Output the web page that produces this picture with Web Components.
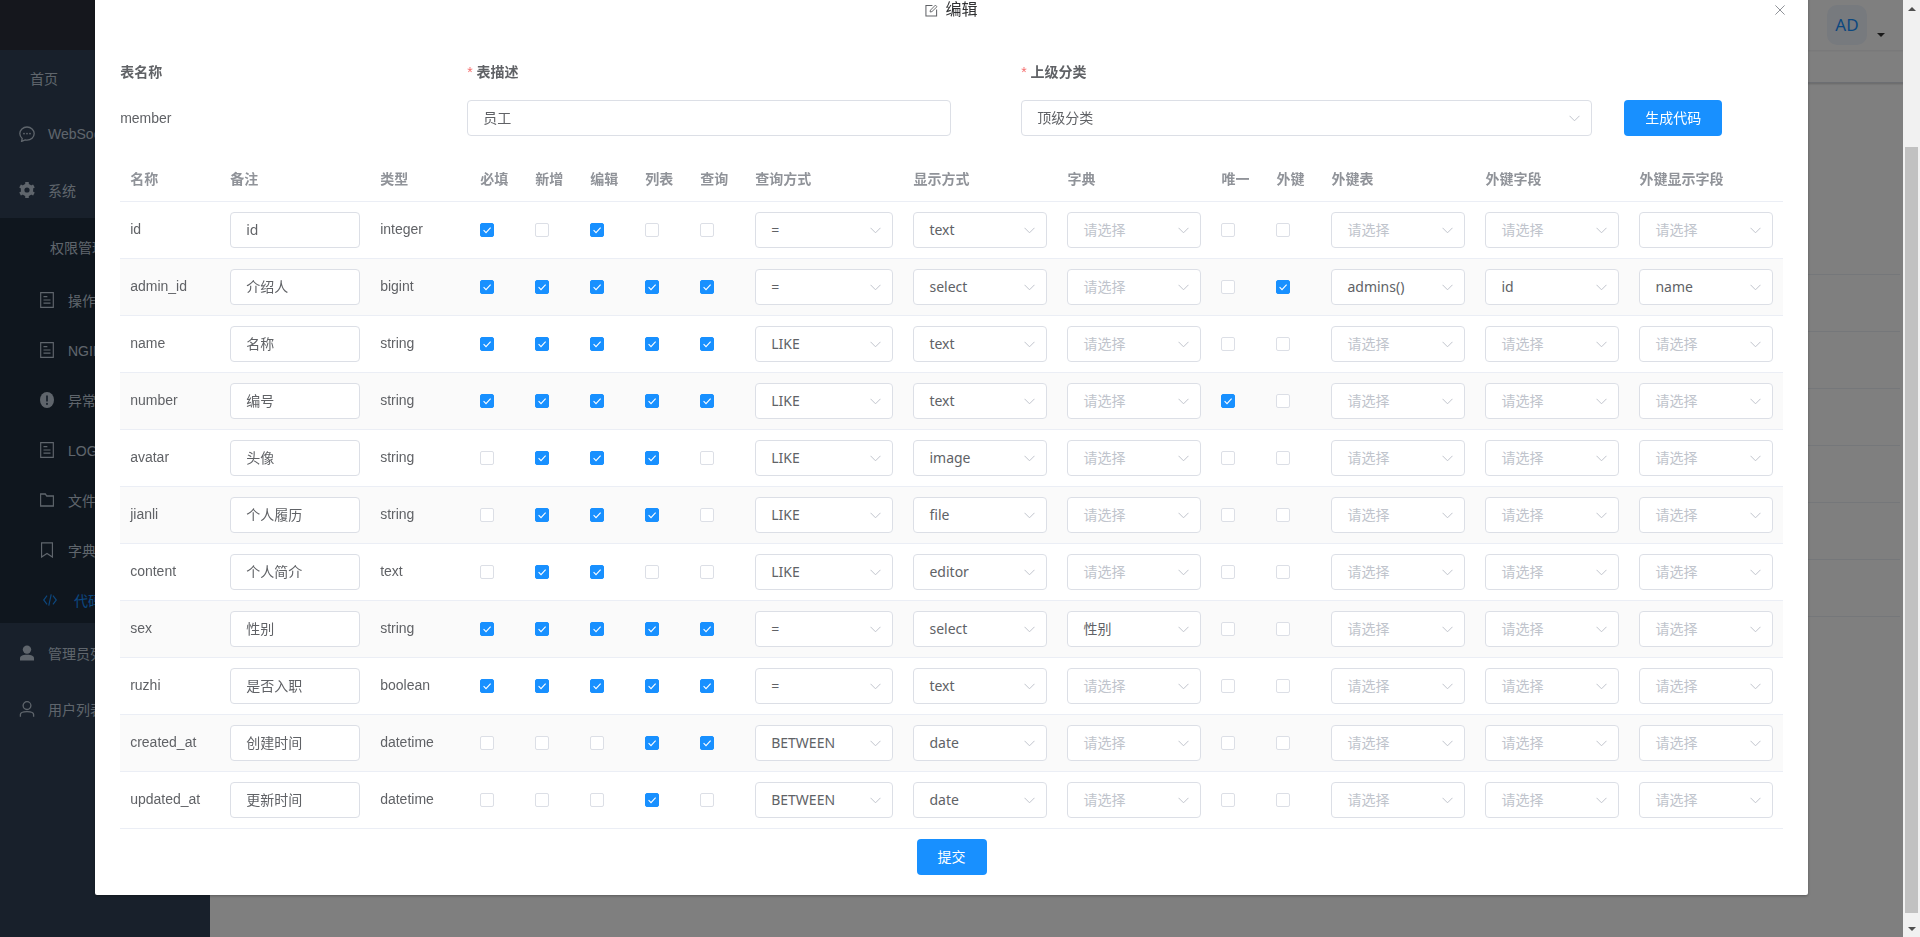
<!DOCTYPE html>
<html lang="zh">
<head>
<meta charset="utf-8">
<title>编辑</title>
<style>
  html, body { margin: 0; height: 100%; overflow: hidden; background: #fff; }
  body { font: 14px "Liberation Sans", "Noto Sans CJK SC", sans-serif; color: #606266; }
</style>
</head>
<body>
<app-shell>
  <app-sidebar slot="side"></app-sidebar>
  <app-navbar slot="top"></app-navbar>
</app-shell>
<modal-backdrop>
  <edit-dialog></edit-dialog>
</modal-backdrop>
<page-scrollbar></page-scrollbar>

<script>
const ICONS = {
  chat: '<path d="M8 1c-4 0-7.2 2.9-7.2 6.6 0 1.9.9 3.7 2.4 4.9L2.6 15.4l3.5-1.5c.6.2 1.2.3 1.9.3 4 0 7.2-3 7.2-6.6S12 1 8 1z" fill="none" stroke="currentColor" stroke-width="1.3"/><circle cx="5" cy="7.6" r=".9" fill="currentColor"/><circle cx="8" cy="7.6" r=".9" fill="currentColor"/><circle cx="11" cy="7.6" r=".9" fill="currentColor"/>',
  gear: '<g fill="currentColor"><path fill-rule="evenodd" d="M8 1.8a6.2 6.2 0 1 0 0 12.4A6.2 6.2 0 0 0 8 1.8zm0 3.6a2.6 2.6 0 1 1 0 5.2 2.6 2.6 0 0 1 0-5.2z"/><rect x="6.2" y="0" width="3.6" height="3.6" rx=".5"/><rect x="6.2" y="12.4" width="3.6" height="3.6" rx=".5"/><rect x="6.2" y="0" width="3.6" height="3.6" rx=".5" transform="rotate(60 8 8)"/><rect x="6.2" y="12.4" width="3.6" height="3.6" rx=".5" transform="rotate(60 8 8)"/><rect x="6.2" y="0" width="3.6" height="3.6" rx=".5" transform="rotate(120 8 8)"/><rect x="6.2" y="12.4" width="3.6" height="3.6" rx=".5" transform="rotate(120 8 8)"/></g>',
  doc: '<path d="M.8.7h14.4v14.6H.8z" fill="none" stroke="currentColor" stroke-width="1.3"/><path d="M4 4.6h4.4M4 8h8M4 11.2h8" stroke="currentColor" stroke-width="1.2" fill="none"/>',
  alert: '<circle cx="8" cy="8" r="8" fill="currentColor"/><path d="M8 3.4v6" stroke="#304156" stroke-width="2" fill="none"/><circle cx="8" cy="11.9" r="1.1" fill="#304156"/>',
  folder: '<path d="M.7 2h5.4l1.6 2h7.6v10H.7z" fill="none" stroke="currentColor" stroke-width="1.3"/>',
  bookmark: '<path d="M1.8.8h12.4v14.2L8 11.4 1.8 15z" fill="none" stroke="currentColor" stroke-width="1.3"/>',
  code: '<path d="M4.6 3.6L.8 8l3.8 4.4M11.4 3.6L15.2 8l-3.8 4.4M9.4 2.4L6.6 13.6" fill="none" stroke="currentColor" stroke-width="1.3"/>',
  user: '<circle cx="8" cy="4.6" r="4.2" fill="currentColor"/><path d="M1 15.6v-2.2c0-2.4 2.4-3.6 7-3.6s7 1.2 7 3.6v2.2z" fill="currentColor"/>',
  userline: '<circle cx="8" cy="4.6" r="3.9" fill="none" stroke="currentColor" stroke-width="1.3"/><path d="M1.4 15.8v-2.2c0-2 2.2-3 6.6-3s6.6 1 6.6 3v2.2" fill="none" stroke="currentColor" stroke-width="1.3"/>',
};

class AppShell extends HTMLElement {
  constructor() {
    super();
    this.attachShadow({ mode: 'open' });
    this.shadowRoot.innerHTML = `
      <style>
        :host { display: flex; height: 937px; }
        #main { flex: 1; display: flex; flex-direction: column; min-width: 0; }
      </style>
      <slot name="side"></slot>
      <div id="main"><slot name="top"></slot></div>
    `;
  }
}
customElements.define('app-shell', AppShell);

class MenuEntry extends HTMLElement {
  constructor() {
    super();
    this.attachShadow({ mode: 'open' });
    const icon = this.getAttribute('icon');
    this.shadowRoot.innerHTML = `
      <style>
        :host {
          display: flex;
          align-items: center;
          height: 56px;
          padding-left: 19px;
          gap: 13px;
          color: #bfcbd9;
          font-size: 14px;
          white-space: nowrap;
        }
        :host([plain]) { padding-left: 30px; }
        :host([sub]) { height: 50px; padding-left: 40px; gap: 14px; }
        :host([head]) { height: 57px; padding-left: 50px; box-sizing: border-box; }
        :host([active]) { color: #1890ff; padding-left: 43px; gap: 17px; }
        svg { width: 16px; height: 16px; flex: none; }
        :host([sub]) svg { width: 14px; height: 16px; }
      </style>
      ${icon ? `<svg viewBox="0 0 16 16" preserveAspectRatio="none">${ICONS[icon]}</svg>` : ''}
      <slot></slot>
    `;
  }
}
customElements.define('menu-entry', MenuEntry);

class AppSidebar extends HTMLElement {
  constructor() {
    super();
    this.attachShadow({ mode: 'open' });
    this.shadowRoot.innerHTML = `
      <style>
        :host { display: block; width: 210px; flex: none; background: #304156; }
        #logo { height: 50px; background: #2b2f3a; }
        #sub { background: #1f2d3d; height: 405px; margin-bottom: 2px; overflow: hidden; }
      </style>
      <div id="logo"></div>
      <menu-entry plain>首页</menu-entry>
      <menu-entry icon="chat">WebSocket</menu-entry>
      <menu-entry icon="gear">系统</menu-entry>
      <div id="sub">
        <menu-entry sub head>权限管理</menu-entry>
        <menu-entry sub icon="doc">操作日志</menu-entry>
        <menu-entry sub icon="doc">NGINX日志</menu-entry>
        <menu-entry sub icon="alert">异常日志</menu-entry>
        <menu-entry sub icon="doc">LOG日志</menu-entry>
        <menu-entry sub icon="folder">文件管理</menu-entry>
        <menu-entry sub icon="bookmark">字典管理</menu-entry>
        <menu-entry sub active icon="code">代码生成</menu-entry>
      </div>
      <menu-entry icon="user">管理员列表</menu-entry>
      <menu-entry icon="userline">用户列表</menu-entry>
    `;
  }
}
customElements.define('app-sidebar', AppSidebar);

class AppNavbar extends HTMLElement {
  constructor() {
    super();
    this.attachShadow({ mode: 'open' });
    this.shadowRoot.innerHTML = `
      <style>
        :host { display: block; }
        #bar {
          height: 50px;
          display: flex;
          justify-content: flex-end;
          align-items: center;
          padding-right: 35px;
          gap: 10px;
          background: #fff;
          box-shadow: 0 1px 2px rgba(0, 21, 41, .08);
          position: relative;
        }
        #avatar {
          width: 40px;
          height: 40px;
          border-radius: 10px;
          background: #eef4fc;
          color: #1890ff;
          font: 17px/40px "Noto Sans", sans-serif;
          text-align: center;
        }
        #caret {
          width: 0;
          height: 0;
          margin-top: 20px;
          border: 4px solid transparent;
          border-top-color: #333;
          border-bottom: 0;
        }
        #tags { height: 33px; background: #fff; box-shadow: 0 1px 2px rgba(0, 0, 0, .2); border-bottom: 1px solid #d8dce5; box-sizing: border-box; }
        #rows { margin: 135px 20px 0 0; }
        #rows div { height: 57px; box-sizing: border-box; border-bottom: 1px solid #ebeef5; }
      </style>
      <div id="bar"><div id="avatar">AD</div><div id="caret"></div></div>
      <div id="tags"></div>
      <div id="rows"><div></div><div></div><div></div><div></div><div></div><div></div><div></div></div>
    `;
  }
}
customElements.define('app-navbar', AppNavbar);

class ModalBackdrop extends HTMLElement {
  constructor() {
    super();
    this.attachShadow({ mode: 'open' });
    this.shadowRoot.innerHTML = `
      <style>
        :host {
          position: fixed;
          inset: 0 17px 0 0;
          background: rgba(0, 0, 0, .5);
          overflow: hidden;
        }
      </style>
      <slot></slot>
    `;
  }
}
customElements.define('modal-backdrop', ModalBackdrop);

class PageScrollbar extends HTMLElement {
  constructor() {
    super();
    this.attachShadow({ mode: 'open' });
    this.shadowRoot.innerHTML = `
      <style>
        :host {
          position: fixed;
          top: 0;
          right: 0;
          bottom: 0;
          width: 17px;
          background: #f1f1f1;
        }
        #thumb { position: absolute; top: 147px; left: 2px; width: 13px; height: 766px; background: #c1c1c1; }
        .arrow { position: absolute; left: 5px; width: 0; height: 0; border: 4px solid transparent; }
        #up { top: 5px; border-bottom: 4px solid #505050; border-top: 0; margin-top: 2px; }
        #down { bottom: 6px; border-top: 4px solid #505050; border-bottom: 0; }
      </style>
      <div id="up" class="arrow"></div>
      <div id="thumb"></div>
      <div id="down" class="arrow"></div>
    `;
  }
}
customElements.define('page-scrollbar', PageScrollbar);

const FIELD_BOX = `
  :host {
    display: flex;
    align-items: center;
    box-sizing: border-box;
    height: 36px;
    padding: 0 11px 2px 15px;
    background: #fff;
    border: 1px solid #dcdfe6;
    border-radius: 4px;
    font: 14px "Noto Sans", "Noto Sans CJK SC", sans-serif;
    color: #606266;
    white-space: nowrap;
  }
`;

class TextField extends HTMLElement {
  constructor() {
    super();
    this.attachShadow({ mode: 'open' });
    this.shadowRoot.innerHTML = `<style>${FIELD_BOX}</style><slot></slot>`;
  }
}
customElements.define('text-field', TextField);

class PickField extends HTMLElement {
  constructor() {
    super();
    this.attachShadow({ mode: 'open' });
    this.shadowRoot.innerHTML = `
      <style>
        ${FIELD_BOX}
        :host([empty]) { color: #c0c4cc; }
        #value { flex: 1; }
        svg { width: 11px; height: 7px; flex: none; color: #c0c4cc; margin-top: 2px; }
      </style>
      <span id="value"><slot></slot></span>
      <svg viewBox="0 0 11 7"><path d="M.5.8l5 5 5-5" fill="none" stroke="currentColor"/></svg>
    `;
  }
}
customElements.define('pick-field', PickField);

class CheckMark extends HTMLElement {
  constructor() {
    super();
    this.attachShadow({ mode: 'open' });
    this.shadowRoot.innerHTML = `
      <style>
        :host {
          display: block;
          box-sizing: border-box;
          width: 14px;
          height: 14px;
          background: #fff;
          border: 1px solid #dcdfe6;
          border-radius: 2px;
        }
        :host([on]) { background: #1890ff; border-color: #1890ff; }
        svg { display: none; width: 12px; height: 12px; }
        :host([on]) svg { display: block; }
      </style>
      <svg viewBox="0 0 12 12"><path d="M2.6 6.2l2.4 2.4 4.6-5" fill="none" stroke="#fff" stroke-width="1.1"/></svg>
    `;
  }
}
customElements.define('check-mark', CheckMark);

class BlueButton extends HTMLElement {
  constructor() {
    super();
    this.attachShadow({ mode: 'open' });
    this.shadowRoot.innerHTML = `
      <style>
        :host {
          display: inline-flex;
          align-items: center;
          justify-content: center;
          box-sizing: border-box;
          height: 36px;
          padding-bottom: 2px;
          background: #1890ff;
          border-radius: 4px;
          color: #fff;
          font-size: 14px;
        }
      </style>
      <slot></slot>
    `;
  }
}
customElements.define('blue-button', BlueButton);

const COLUMNS = ['名称', '备注', '类型', '必填', '新增', '编辑', '列表', '查询', '查询方式', '显示方式', '字典', '唯一', '外键', '外键表', '外键字段', '外键显示字段'];

// name, comment, type, flags (required add edit list query), query, display, dict, unique, foreign, fk table, fk field, fk label
const FIELDS = [
  ['id', 'id', 'integer', '10100', '=', 'text', '', 0, 0],
  ['admin_id', '介绍人', 'bigint', '11111', '=', 'select', '', 0, 1, 'admins()', 'id', 'name'],
  ['name', '名称', 'string', '11111', 'LIKE', 'text', '', 0, 0],
  ['number', '编号', 'string', '11111', 'LIKE', 'text', '', 1, 0],
  ['avatar', '头像', 'string', '01110', 'LIKE', 'image', '', 0, 0],
  ['jianli', '个人履历', 'string', '01110', 'LIKE', 'file', '', 0, 0],
  ['content', '个人简介', 'text', '01100', 'LIKE', 'editor', '', 0, 0],
  ['sex', '性别', 'string', '11111', '=', 'select', '性别', 0, 0],
  ['ruzhi', '是否入职', 'boolean', '11111', '=', 'text', '', 0, 0],
  ['created_at', '创建时间', 'datetime', '00011', 'BETWEEN', 'date', '', 0, 0],
  ['updated_at', '更新时间', 'datetime', '00010', 'BETWEEN', 'date', '', 0, 0],
];

const pick = (v) => v ? `<pick-field>${v}</pick-field>` : '<pick-field empty>请选择</pick-field>';
const check = (v) => `<check-mark ${v ? 'on' : ''}></check-mark>`;

class FieldTable extends HTMLElement {
  constructor() {
    super();
    this.attachShadow({ mode: 'open' });
    const rows = FIELDS.map((f) => `
      <div class="row">
        <div class="cell t">${f[0]}</div>
        <div class="cell"><text-field>${f[1]}</text-field></div>
        <div class="cell t">${f[2]}</div>
        ${[...f[3]].map((c) => `<div class="cell">${check(c === '1')}</div>`).join('')}
        <div class="cell">${pick(f[4])}</div>
        <div class="cell">${pick(f[5])}</div>
        <div class="cell">${pick(f[6])}</div>
        <div class="cell">${check(f[7])}</div>
        <div class="cell">${check(f[8])}</div>
        <div class="cell">${pick(f[9])}</div>
        <div class="cell">${pick(f[10])}</div>
        <div class="cell">${pick(f[11])}</div>
      </div>`).join('');
    this.shadowRoot.innerHTML = `
      <style>
        :host { display: block; }
        .row, #head {
          display: grid;
          grid-template-columns: 100px 150px 100px repeat(5, 55px) 158.3px 154px 154px 55px 55px 154px 154px 1fr;
          box-sizing: border-box;
          height: 57px;
          border-bottom: 1px solid #ebeef5;
        }
        #head { height: 45px; font-weight: bold; color: #909399; }
        #head .cell { padding-bottom: 2px; }
        .row:nth-child(even) { background: #fafafa; }
        .cell {
          display: flex;
          flex-direction: column;
          justify-content: center;
          padding: 0 10px;
          min-width: 0;
          white-space: nowrap;
        }
        .cell.t { padding-bottom: 2px; }
        .cell > * { align-self: stretch; }
        .cell > check-mark { align-self: flex-start; }
      </style>
      <div id="head">${COLUMNS.map((c) => `<div class="cell">${c}</div>`).join('')}</div>
      <div id="rows">${rows}</div>
    `;
  }
}
customElements.define('field-table', FieldTable);

class EditDialog extends HTMLElement {
  constructor() {
    super();
    this.attachShadow({ mode: 'open' });
    this.shadowRoot.innerHTML = `
      <style>
        :host {
          display: block;
          position: relative;
          box-sizing: border-box;
          width: 90%;
          margin: -23px auto 0;
          padding: 0 25px 20px;
          background: #fff;
          border-radius: 2px;
          box-shadow: 0 1px 3px rgba(0, 0, 0, .3);
        }
        header {
          display: flex;
          justify-content: center;
          align-items: center;
          gap: 7px;
          height: 24px;
          padding: 21px 0 9px;
          color: #303133;
          font-size: 16px;
          line-height: 24px;
        }
        header svg { width: 13px; height: 13px; color: #606266; }
        #close { position: absolute; top: 28px; right: 23px; width: 10px; height: 10px; color: #909399; }
        #form {
          display: grid;
          grid-template-columns: 347px 554px 603px 1fr;
          grid-template-rows: 22px 36px;
          row-gap: 17px;
          align-items: center;
          margin-top: 7px;
          padding-top: 23px;
        }
        .label { font-weight: bold; padding-bottom: 2px; }
        .label i { color: #f56c6c; font-style: normal; font-weight: normal; margin-right: 4px; }
        #desc { width: 484px; }
        #parent { width: 571px; }
        #gen { width: 98px; }
        field-table { margin-top: 21px; }
        #submit { display: flex; justify-content: center; margin-top: 10px; }
        #submit blue-button { width: 70px; }
      </style>
      <header>
        <svg viewBox="0 0 14 14"><path d="M8 1.5H1v11.5h11.5V6" fill="none" stroke="currentColor" stroke-width="1.1"/><path d="M5.5 8.6l.4-2L11.2 1.2l1.7 1.7L7.5 8.2z" fill="none" stroke="currentColor" stroke-width="1"/></svg>
        <span>编辑</span>
      </header>
      <svg id="close" viewBox="0 0 10 10"><path d="M.4.4l9.2 9.2M9.6.4L.4 9.6" stroke="currentColor" fill="none"/></svg>
      <div id="form">
        <div class="label">表名称</div>
        <div class="label"><i>*</i>表描述</div>
        <div class="label"><i>*</i>上级分类</div>
        <div></div>
        <div>member</div>
        <text-field id="desc">员工</text-field>
        <pick-field id="parent">顶级分类</pick-field>
        <blue-button id="gen">生成代码</blue-button>
      </div>
      <field-table></field-table>
      <div id="submit"><blue-button>提交</blue-button></div>
    `;
  }
}
customElements.define('edit-dialog', EditDialog);
</script>
</body>
</html>
